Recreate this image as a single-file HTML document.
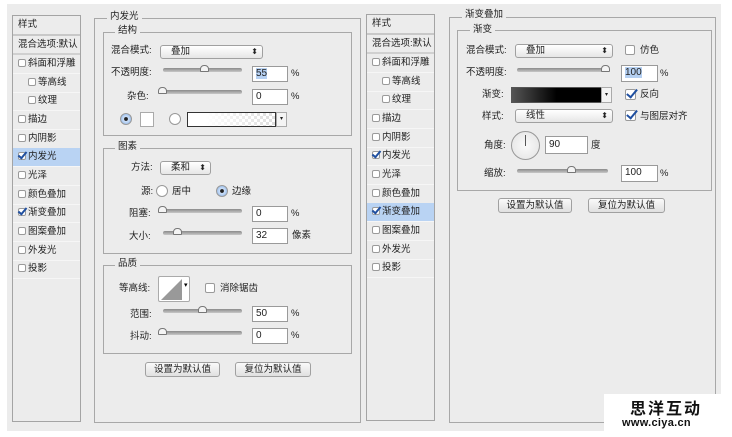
<!DOCTYPE html>
<html><head><meta charset="utf-8"><style>
*{box-sizing:border-box;margin:0;padding:0}
body{width:732px;height:437px;background:#fff;position:relative;overflow:hidden;font-family:"Liberation Sans","Noto Sans CJK SC",sans-serif;font-size:9.5px;color:#222}
.a{position:absolute}
.bg{left:7px;top:4px;width:714px;height:427px;background:#ececec}
.list{background:#ececec;border:1px solid #a4a4a4}
.row{position:absolute;left:0;right:0;height:19px;line-height:18px;border-bottom:1px solid #f6f6f6;padding-left:5px;white-space:nowrap}
.sel{background:#b9d3f3}
.cb{display:inline-block;width:8px;height:8px;border:1px solid #9a9a9a;border-radius:2px;background:#fff;vertical-align:-1px;margin-right:2px;position:relative}
.cb.on::after{content:"";position:absolute;left:1px;top:-3px;width:3px;height:7px;border:solid #1f4fa0;border-width:0 2px 2px 0;transform:rotate(40deg)}
.cbb{width:11px;height:11px}
.cbb.on::after{left:3px;top:-3px;width:4px;height:9px}
.box{border:1px solid #a8a8a8}
.leg{position:absolute;background:#ececec;padding:0 3px;line-height:12px}
.lab{position:absolute;text-align:right;line-height:12px;white-space:nowrap}
.sl{position:absolute;height:4px;background:linear-gradient(#8a8a8a,#c8c8c8);border-radius:2px}
.th{position:absolute;width:9px;height:7px;border:1px solid #777;background:#f4f4f4;border-radius:4px 4px 1px 1px;top:-3px}
.in{position:absolute;background:#fff;border:1px solid #9a9a9a;line-height:14px;padding-left:3px;font-size:10px}
.sels{position:absolute;background:linear-gradient(#fff,#e6e6e6);border:1px solid #a0a0a0;border-radius:3px;line-height:12px;padding-left:10px}
.sels::after{content:"⬍";position:absolute;right:4px;top:0;font-size:8px}
.btn{position:absolute;background:linear-gradient(#fafafa,#e0e0e0);border:1px solid #a0a0a0;border-radius:3px;text-align:center;line-height:13px}
.rd{position:absolute;width:12px;height:12px;border:1px solid #999;border-radius:50%;background:#fff}
.rd.on{background:radial-gradient(circle,#222 0 1.6px,#cfe2fa 2.3px,#8fb6e8 6px)}
</style></head><body>
<div class="a bg"></div>

<div class="a list" style="left:12px;top:15px;width:69px;height:407px">
 <div class="row" style="top:0;height:20px;border-bottom:2px solid #c8c8c8">样式</div>
 <div class="row" style="top:20px;height:19px;border-bottom:2px solid #d0d0d0">混合选项:默认</div>
 <div class="row" style="top:39px"><span class="cb"></span>斜面和浮雕</div>
 <div class="row" style="top:58px;padding-left:15px"><span class="cb"></span>等高线</div>
 <div class="row" style="top:76px;padding-left:15px"><span class="cb"></span>纹理</div>
 <div class="row" style="top:95px"><span class="cb"></span>描边</div>
 <div class="row" style="top:114px"><span class="cb"></span>内阴影</div>
 <div class="row sel" style="top:132px"><span class="cb on"></span>内发光</div>
 <div class="row" style="top:151px"><span class="cb"></span>光泽</div>
 <div class="row" style="top:170px"><span class="cb"></span>颜色叠加</div>
 <div class="row" style="top:188px"><span class="cb on"></span>渐变叠加</div>
 <div class="row" style="top:207px"><span class="cb"></span>图案叠加</div>
 <div class="row" style="top:226px"><span class="cb"></span>外发光</div>
 <div class="row" style="top:244px"><span class="cb"></span>投影</div>
</div>

<div class="a box" style="left:94px;top:18px;width:267px;height:405px"></div>
<div class="leg" style="left:107px;top:11px">内发光</div>
<div class="a box" style="left:103px;top:32px;width:249px;height:104px"></div>
<div class="leg" style="left:115px;top:25px">结构</div>
<div class="lab" style="left:111px;top:45px">混合模式:</div>
<div class="sels" style="left:160px;top:45px;width:103px;height:14px">叠加</div>
<div class="lab" style="left:111px;top:67px">不透明度:</div>
<div class="sl" style="left:163px;top:68px;width:79px"><div class="th" style="left:37px"></div></div>
<div class="in" style="left:252px;top:66px;width:36px;height:16px"><span style="background:#b5d0f2">55</span></div>
<div class="lab" style="left:291px;top:68px">%</div>
<div class="lab" style="left:127px;top:91px">杂色:</div>
<div class="sl" style="left:160px;top:90px;width:82px"><div class="th" style="left:-2px"></div></div>
<div class="in" style="left:252px;top:89px;width:36px;height:16px">0</div>
<div class="lab" style="left:291px;top:91px">%</div>
<div class="rd on" style="left:120px;top:113px"></div>
<div class="a" style="left:140px;top:112px;width:14px;height:15px;background:#fff;border:1px solid #aaa"></div>
<div class="rd" style="left:169px;top:113px"></div>
<div class="a" style="left:187px;top:112px;width:89px;height:15px;border:1px solid #333;background:linear-gradient(90deg,#fff 20%,rgba(255,255,255,0)),repeating-conic-gradient(#ddd 0 25%,#fff 0 50%) 0 0/6px 6px"></div>
<div class="a" style="left:276px;top:112px;width:11px;height:15px;border:1px solid #aaa;background:#f4f4f4;font-size:6px;text-align:center;line-height:13px">▾</div>

<div class="a box" style="left:103px;top:148px;width:249px;height:106px"></div>
<div class="leg" style="left:115px;top:141px">图素</div>
<div class="lab" style="left:131px;top:162px">方法:</div>
<div class="sels" style="left:160px;top:161px;width:51px;height:14px">柔和</div>
<div class="lab" style="left:141px;top:186px">源:</div>
<div class="rd" style="left:156px;top:185px"></div><div class="lab" style="left:172px;top:186px">居中</div>
<div class="rd on" style="left:216px;top:185px"></div><div class="lab" style="left:232px;top:186px">边缘</div>
<div class="lab" style="left:129px;top:208px">阻塞:</div>
<div class="sl" style="left:160px;top:209px;width:82px"><div class="th" style="left:-2px"></div></div>
<div class="in" style="left:252px;top:206px;width:36px;height:16px">0</div>
<div class="lab" style="left:291px;top:208px">%</div>
<div class="lab" style="left:129px;top:231px">大小:</div>
<div class="sl" style="left:163px;top:231px;width:79px"><div class="th" style="left:10px"></div></div>
<div class="in" style="left:252px;top:228px;width:36px;height:16px">32</div>
<div class="lab" style="left:292px;top:230px">像素</div>

<div class="a box" style="left:103px;top:265px;width:249px;height:89px"></div>
<div class="leg" style="left:115px;top:258px">品质</div>
<div class="lab" style="left:119px;top:283px">等高线:</div>
<div class="a" style="left:158px;top:276px;width:32px;height:26px;border:1px solid #aaa;background:#fff;border-radius:2px">
 <svg width="30" height="24" style="position:absolute;left:0;top:0"><polygon points="2,23 23,2 23,23" fill="#999"/><text x="25" y="10" font-size="7">▾</text></svg>
</div>
<div class="a" style="left:205px;top:283px"><span class="cb" style="width:10px;height:10px"></span></div>
<div class="lab" style="left:220px;top:283px">消除锯齿</div>
<div class="lab" style="left:130px;top:309px">范围:</div>
<div class="sl" style="left:163px;top:309px;width:79px"><div class="th" style="left:35px"></div></div>
<div class="in" style="left:252px;top:306px;width:36px;height:16px">50</div>
<div class="lab" style="left:291px;top:308px">%</div>
<div class="lab" style="left:130px;top:331px">抖动:</div>
<div class="sl" style="left:160px;top:331px;width:82px"><div class="th" style="left:-2px"></div></div>
<div class="in" style="left:252px;top:328px;width:36px;height:16px">0</div>
<div class="lab" style="left:291px;top:330px">%</div>
<div class="btn" style="left:145px;top:362px;width:75px;height:15px">设置为默认值</div>
<div class="btn" style="left:235px;top:362px;width:76px;height:15px">复位为默认值</div>

<div class="a list" style="left:366px;top:14px;width:69px;height:407px">
 <div class="row" style="top:0;height:20px;border-bottom:2px solid #c8c8c8">样式</div>
 <div class="row" style="top:20px;height:19px;border-bottom:2px solid #d0d0d0">混合选项:默认</div>
 <div class="row" style="top:39px"><span class="cb"></span>斜面和浮雕</div>
 <div class="row" style="top:58px;padding-left:15px"><span class="cb"></span>等高线</div>
 <div class="row" style="top:76px;padding-left:15px"><span class="cb"></span>纹理</div>
 <div class="row" style="top:95px"><span class="cb"></span>描边</div>
 <div class="row" style="top:114px"><span class="cb"></span>内阴影</div>
 <div class="row" style="top:132px"><span class="cb on"></span>内发光</div>
 <div class="row" style="top:151px"><span class="cb"></span>光泽</div>
 <div class="row" style="top:170px"><span class="cb"></span>颜色叠加</div>
 <div class="row sel" style="top:188px"><span class="cb on"></span>渐变叠加</div>
 <div class="row" style="top:207px"><span class="cb"></span>图案叠加</div>
 <div class="row" style="top:226px"><span class="cb"></span>外发光</div>
 <div class="row" style="top:244px"><span class="cb"></span>投影</div>
</div>

<div class="a box" style="left:449px;top:17px;width:267px;height:406px"></div>
<div class="leg" style="left:462px;top:9px">渐变叠加</div>
<div class="a box" style="left:457px;top:30px;width:255px;height:161px"></div>
<div class="leg" style="left:470px;top:24px">渐变</div>
<div class="lab" style="left:466px;top:45px">混合模式:</div>
<div class="sels" style="left:515px;top:44px;width:98px;height:14px">叠加</div>
<div class="a" style="left:625px;top:45px"><span class="cb" style="width:10px;height:10px"></span></div>
<div class="lab" style="left:640px;top:45px">仿色</div>
<div class="lab" style="left:466px;top:67px">不透明度:</div>
<div class="sl" style="left:517px;top:68px;width:91px"><div class="th" style="left:84px"></div></div>
<div class="in" style="left:621px;top:65px;width:37px;height:17px"><span style="background:#b5d0f2">100</span></div>
<div class="lab" style="left:660px;top:68px">%</div>
<div class="lab" style="left:482px;top:89px">渐变:</div>
<div class="a" style="left:511px;top:87px;width:91px;height:16px;border:1px solid #555;background:linear-gradient(90deg,#555,#000 50%,#000)"></div>
<div class="a" style="left:601px;top:87px;width:11px;height:16px;border:1px solid #aaa;background:#f4f4f4;font-size:6px;text-align:center;line-height:14px">▾</div>
<div class="a" style="left:625px;top:89px"><span class="cb cbb on"></span></div>
<div class="lab" style="left:640px;top:89px">反向</div>
<div class="lab" style="left:482px;top:111px">样式:</div>
<div class="sels" style="left:515px;top:109px;width:98px;height:14px">线性</div>
<div class="a" style="left:625px;top:110px"><span class="cb cbb on"></span></div>
<div class="lab" style="left:640px;top:111px">与图层对齐</div>
<div class="lab" style="left:484px;top:140px">角度:</div>
<div class="a" style="left:511px;top:131px;width:29px;height:29px;border:1px solid #999;border-radius:50%;background:radial-gradient(circle,#fafafa,#e2e2e2)"><div class="a" style="left:13px;top:3px;width:1px;height:11px;background:#555"></div></div>
<div class="in" style="left:545px;top:136px;width:43px;height:18px;line-height:16px">90</div>
<div class="lab" style="left:591px;top:140px">度</div>
<div class="lab" style="left:484px;top:168px">缩放:</div>
<div class="sl" style="left:517px;top:169px;width:91px"><div class="th" style="left:50px"></div></div>
<div class="in" style="left:621px;top:165px;width:37px;height:17px">100</div>
<div class="lab" style="left:660px;top:168px">%</div>
<div class="btn" style="left:498px;top:198px;width:74px;height:15px">设置为默认值</div>
<div class="btn" style="left:588px;top:198px;width:77px;height:15px">复位为默认值</div>

<div class="a" style="left:604px;top:394px;width:128px;height:43px;background:#fff"></div>
<div class="a" style="left:630px;top:397px;font-size:16px;font-weight:bold;line-height:20px;font-family:'Noto Sans CJK SC',sans-serif;letter-spacing:2px;color:#111">思洋互动</div>
<div class="a" style="left:622px;top:417px;font-size:11px;font-weight:bold;line-height:12px;color:#111;letter-spacing:0.3px">www.ciya.cn</div>
</body></html>
